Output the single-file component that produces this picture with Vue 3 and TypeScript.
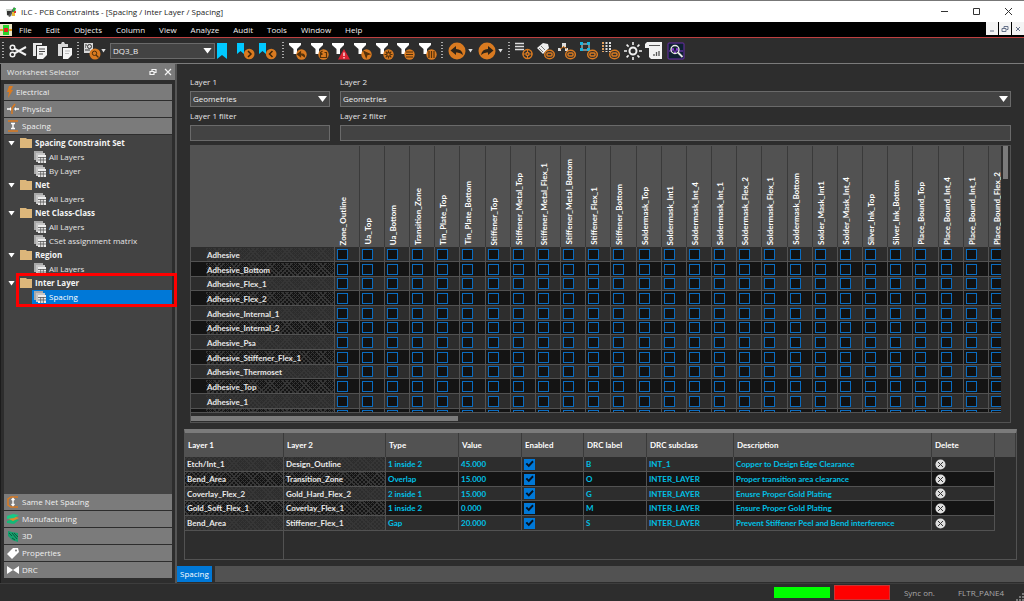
<script setup lang="ts">
import { ref } from 'vue'

interface Item { label: string; icon: string }
interface Group { label: string; sheets: string[] }
interface Rule {
  layer1: string; layer2: string; type: string; value: string
  enabled: boolean; drc: string; subclass: string; description: string
}

const menus = ['File', 'Edit', 'Objects', 'Column', 'View', 'Analyze', 'Audit', 'Tools', 'Window', 'Help']

const filters: Item[] = [
  { label: 'Restore filter', icon: 'back' },
  { label: 'Save filter', icon: 'box' },
  { label: 'Filter violations', icon: 'warn' },
  { label: 'Filter selection', icon: 'cursor' },
  { label: 'Filter settings', icon: 'gear' },
  { label: 'Filter rows', icon: 'rows' },
  { label: 'Filter columns', icon: 'cols' },
]
const tools: Item[] = [
  { label: 'Target list', icon: 'list' },
  { label: 'Show tags', icon: 'tags' },
  { label: 'Show hierarchy', icon: 'tree' },
  { label: 'Show nodes', icon: 'nodes' },
  { label: 'Show grid', icon: 'grid' },
  { label: 'Options', icon: 'sun' },
  { label: 'Report', icon: 'report' },
  { label: 'Analyze', icon: 'analyze' },
]

const topDomains: Item[] = [
  { label: 'Electrical', icon: 'bolt' },
  { label: 'Physical', icon: 'physical' },
  { label: 'Spacing', icon: 'spacing' },
]
const bottomDomains: Item[] = [
  { label: 'Same Net Spacing', icon: 'samenet' },
  { label: 'Manufacturing', icon: 'layers' },
  { label: '3D', icon: 'cube' },
  { label: 'Properties', icon: 'tag' },
  { label: 'DRC', icon: 'drc' },
]
const groups: Group[] = [
  { label: 'Spacing Constraint Set', sheets: ['All Layers', 'By Layer'] },
  { label: 'Net', sheets: ['All Layers'] },
  { label: 'Net Class-Class', sheets: ['All Layers', 'CSet assignment matrix'] },
  { label: 'Region', sheets: ['All Layers'] },
  { label: 'Inter Layer', sheets: ['Spacing'] },
]

const columns = [
  'Zone_Outline', 'Ua_Top', 'Ua_Bottom', 'Transition_Zone', 'Tin_Plate_Top', 'Tin_Plate_Bottom',
  'Stiffener_Top', 'Stiffener_Metal_Top', 'Stiffener_Metal_Flex_1', 'Stiffener_Metal_Bottom',
  'Stiffener_Flex_1', 'Stiffener_Bottom', 'Soldermask_Top', 'Soldermask_Int1', 'Soldermask_Int_4',
  'Soldermask_Int_1', 'Soldermask_Flex_2', 'Soldermask_Flex_1', 'Soldermask_Bottom',
  'Solder_Mask_Int1', 'Solder_Mask_Int_4', 'Silver_Ink_Top', 'Silver_Ink_Bottom', 'Place_Bound_Top',
  'Place_Bound_Int_4', 'Place_Bound_Int_1', 'Place_Bound_Flex_2',
]
const rows = [
  'Adhesive', 'Adhesive_Bottom', 'Adhesive_Flex_1', 'Adhesive_Flex_2', 'Adhesive_Internal_1',
  'Adhesive_Internal_2', 'Adhesive_Psa', 'Adhesive_Stiffener_Flex_1', 'Adhesive_Thermoset',
  'Adhesive_Top', 'Adhesive_1', 'Assembly_Flex_1',
]

const rules = ref<Rule[]>([
  { layer1: 'Etch/Int_1', layer2: 'Design_Outline', type: '1 inside 2', value: '45.000', enabled: true, drc: 'B', subclass: 'INT_1', description: 'Copper to Design Edge Clearance' },
  { layer1: 'Bend_Area', layer2: 'Transition_Zone', type: 'Overlap', value: '15.000', enabled: true, drc: 'O', subclass: 'INTER_LAYER', description: 'Proper transition area clearance' },
  { layer1: 'Coverlay_Flex_2', layer2: 'Gold_Hard_Flex_2', type: '2 inside 1', value: '15.000', enabled: true, drc: 'G', subclass: 'INTER_LAYER', description: 'Enusre Proper Gold Plating' },
  { layer1: 'Gold_Soft_Flex_1', layer2: 'Coverlay_Flex_1', type: '1 inside 2', value: '0.000', enabled: true, drc: 'M', subclass: 'INTER_LAYER', description: 'Ensure Proper Gold Plating' },
  { layer1: 'Bend_Area', layer2: 'Stiffener_Flex_1', type: 'Gap', value: '20.000', enabled: true, drc: 'S', subclass: 'INTER_LAYER', description: 'Prevent Stiffener Peel and Bend interference' },
])
const heads = ['Layer 1', 'Layer 2', 'Type', 'Value', 'Enabled', 'DRC label', 'DRC subclass', 'Description', 'Delete', '']
const filter1 = ref('')
const filter2 = ref('')
const removeRule = (i: number) => rules.value.splice(i, 1)
</script>

<template>
  <div class="window">
    <header class="titlebar">
      <svg class="app-icon" viewBox="0 0 12 12">
        <path d="M1 3h7v7H2z" fill="#c9cfc9" /><path d="M2 5h4v4H2z" fill="#333" />
        <path d="M3 10 9 1l1 1-5 9z" fill="#555" /><path d="M8 2h3l-1 4H8z" fill="#2fae3e" />
        <path d="M7 6h3v4H7z" fill="#e9b93a" /><path d="M9 5h2v2H9z" fill="#d33" />
      </svg>
      <h1>ILC - PCB Constraints - [Spacing / Inter Layer / Spacing]</h1>
      <div class="win-controls">
        <button aria-label="Minimize"><svg viewBox="0 0 9 9"><path d="M1 4.500h7" /></svg></button>
        <button aria-label="Maximize"><svg viewBox="0 0 9 9"><path d="M1.500 1.500h6v6h-6z" /></svg></button>
        <button aria-label="Close"><svg viewBox="0 0 9 9"><path d="M1 1l7 7M8 1 1 8" /></svg></button>
      </div>
    </header>

    <nav class="menubar">
      <svg class="doc-icon" viewBox="0 0 12 12">
        <path d="M0 0h12v12H0z" fill="#e9e4c4" /><path d="M3 1h6v10H3z" fill="#2bd52b" />
        <path d="M4 4h4v4H4z" fill="#e52222" /><path d="M0 5h3v2H0zM9 5h3v2H9z" fill="#e8a020" />
      </svg>
      <button v-for="m in menus" :key="m" class="menu">{{ m }}</button>
      <div class="mdi">
        <button aria-label="Minimize sheet"><svg viewBox="0 0 8 8"><path d="M2 6h4" /></svg></button>
        <button aria-label="Restore sheet"><svg viewBox="0 0 8 8"><path d="M3 3V1.500h4v3H5.500M1 3.500h4v3H1z" /></svg></button>
        <button aria-label="Close sheet"><svg viewBox="0 0 8 8"><path d="M2 2l4 4M6 2 2 6" /></svg></button>
      </div>
    </nav>

    <div class="toolbar">
      <span class="grip"></span>
      <div class="tools edit">
        <button aria-label="Cut"><svg viewBox="0 0 18 18" fill="none" stroke="#f2f2f2" stroke-width="1.500">
          <circle cx="3.500" cy="5.500" r="2.300" /><circle cx="3.500" cy="12.500" r="2.300" />
          <path d="M5.500 6.700 17 13M5.500 11.300 17 5" stroke-width="2" />
        </svg></button>
        <button aria-label="Copy"><svg viewBox="0 0 18 18">
          <path d="M0 1h9v2H3v11H0z" fill="#e6e6e6" /><path d="M4 4h10v9l-4 4H4z" fill="#f4f4f4" />
          <path d="M6 7h6M6 9.500h6M6 12h4" stroke="#444" />
        </svg></button>
        <button aria-label="Paste"><svg viewBox="0 0 18 18">
          <path d="M2 2h3l1-2h2l1 2h3v3H6v9H2z" fill="#d9d9d9" /><path d="M7 6h9v7l-4 4H7z" fill="#f4f4f4" />
          <path d="M9 9h5M9 11.500h4" stroke="#bbb" />
        </svg></button>
      </div>
      <span class="grip"></span>
      <button class="find" aria-label="Find"><svg viewBox="0 0 18 18">
        <path d="M1 1h9v10H1z" fill="#d8d8d8" /><circle cx="6.500" cy="4.500" r="2" fill="none" stroke="#333" />
        <path d="M2 8h5M2 3h2M2 5h1" stroke="#333" /><circle cx="12" cy="12" r="5.500" fill="#d97a20" />
        <circle cx="11.500" cy="11.300" r="2.200" fill="none" stroke="#50300c" /><path d="m13 13 2.500 2.500" stroke="#50300c" stroke-width="1.300" />
      </svg></button>
      <button class="drop" aria-label="Find options"></button>
      <div class="select finder">
        <select aria-label="Search text"><option>DQ3_B</option></select>
      </div>
      <button class="mark" aria-label="Bookmark"><svg viewBox="0 0 10 18"><path d="M0 1h10v16l-5-4-5 4z" fill="#00c8ff" /></svg></button>
      <div class="tools marks">
        <button v-for="d in ['Next', 'Previous']" :key="d" :aria-label="d + ' bookmark'"><svg viewBox="0 0 18 18">
          <path d="M0 1h7v11l-3.500-3L0 12z" fill="#00c8ff" /><circle cx="12.200" cy="12" r="5.300" fill="#d97a20" />
          <path :d="d === 'Next' ? 'm11 9 3 3-3 3' : 'm13.500 9-3 3 3 3'" fill="none" stroke="#3c2408" stroke-width="1.500" />
        </svg></button>
      </div>
      <span class="grip"></span>
      <div class="tools filters">
        <button v-for="f in filters" :key="f.icon" :aria-label="f.label"><svg viewBox="0 0 18 18">
          <path d="M0 1h12v2L8 7v5H4.500V7L0 3z" fill="#fff" />
          <path v-if="f.icon === 'warn'" d="m12 7 6 10.500H6z" fill="#d92231" />
          <circle v-else cx="12.500" cy="12.500" r="5.200" fill="#d97a20" />
          <path v-if="f.icon === 'warn'" d="M12 10.500V14M12 15v1.500" stroke="#fff" stroke-width="1.200" />
          <g v-else fill="none" stroke="#54310b" stroke-width="1.200">
            <path v-if="f.icon === 'back'" d="M11.500 10v4.500l-3-2.200zM10.500 12.200h3q2 0 2 3" fill="#54310b" />
            <path v-if="f.icon === 'box'" d="M9.500 11v4.500h6v-5h-2M11.500 9l-2 1.500 2 2" />
            <path v-if="f.icon === 'cursor'" d="m10 9.500 5.500 2.500-2.500.7-.8 2.500z" fill="#54310b" />
            <g v-if="f.icon === 'gear'"><circle cx="12.500" cy="12.500" r="1.800" /><path d="M12.500 8.500v2M12.500 14.500v2M8.500 12.500h2M14.500 12.500h2M9.700 9.700l1.300 1.300M14 14l1.300 1.300M15.300 9.700 14 11M9.700 15.300 11 14" /></g>
            <path v-if="f.icon === 'rows'" d="M9 10h7M9 12.500h7M9 15h7" />
            <path v-if="f.icon === 'cols'" d="M10 9v7M12.500 9v7M15 9v7" />
          </g>
        </svg></button>
      </div>
      <span class="grip"></span>
      <div class="history">
        <button aria-label="Undo"><svg viewBox="0 0 18 18"><circle cx="9" cy="9" r="8.500" fill="#d97a20" />
          <path d="M2.500 8.500 8 4v3q6 0 7 6-3-3-7-2.500V13z" fill="#2e2418" /></svg></button>
        <button class="drop" aria-label="Undo history"></button>
        <button aria-label="Redo"><svg viewBox="0 0 18 18"><circle cx="9" cy="9" r="8.500" fill="#d97a20" />
          <path d="M15.500 8.500 10 4v3q-6 0-7 6 3-3 7-2.500V13z" fill="#2e2418" /></svg></button>
        <button class="drop" aria-label="Redo history"></button>
      </div>
      <span class="grip"></span>
      <div class="tools views">
        <button v-for="t in tools" :key="t.icon" :aria-label="t.label"><svg viewBox="0 0 18 18">
          <path v-if="t.icon === 'list'" d="M0 1.500h9M0 4.500h9M0 7.500h9" stroke="#ddd" stroke-width="1.600" />
          <g v-if="t.icon === 'tags'"><path d="m0 6 6-5 5 1 1 4-6 6z" fill="#eee" /><path d="m2 6 4 4M4 4l4 4" stroke="#444" stroke-width=".7" /></g>
          <path v-if="t.icon === 'tree'" d="M4 1h4v4H4zM0 6h3v3H0zM7 6h3v3H7z" fill="#ddd" />
          <path v-if="t.icon === 'tree'" d="M5.500 4v1L2 7M6 5l3 2" stroke="#d97a20" fill="none" />
          <g v-if="t.icon === 'nodes'"><path d="M2 2h7v6H2z" fill="none" stroke="#ddd" /><path d="M0 0h3v3H0zM7 0h3v3H7zM0 6h3v3H0zM7 6h3v3H7z" fill="#19b5e0" /></g>
          <g v-if="t.icon === 'grid'"><path d="M1 0v10" stroke="#e0a060" stroke-width="2" stroke-dasharray="2 1" /><path d="M4.500 0v10M8 0v10" stroke="#ddd" stroke-width="2" stroke-dasharray="2 1" /></g>
          <g v-if="t.icon === 'list'" fill="none" stroke="#d97a20" stroke-width="1.500"><circle cx="12.500" cy="12" r="4.500" /><circle cx="12.500" cy="12" r="1.600" /><path d="M12.500 7v3M12.500 14v3M7.500 12h3M14.500 12h3" stroke-width="1" /></g>
          <g v-if="['tags', 'tree', 'nodes', 'grid'].includes(t.icon)" fill="none" stroke="#d97a20" stroke-width="1.500"><ellipse cx="12.500" cy="12.500" rx="4.800" ry="4.300" /><rect x="10" y="11" width="5" height="3" rx="1" /></g>
          <g v-if="t.icon === 'sun'" fill="none" stroke="#f2f2f2" stroke-width="2"><circle cx="9" cy="9" r="3.500" /><path d="M9 0v3M9 15v3M0 9h3M15 9h3M2.600 2.600l2 2M13.400 13.400l2 2M15.400 2.600l-2 2M2.600 15.400l2-2" stroke-width="1.600" /></g>
          <g v-if="t.icon === 'report'"><path d="M2 0h15v17H6l-2-2V6H0V2z" fill="#f2f2f2" /><path d="M4 3.500h11" stroke="#555" /><path d="M9 14v-2M11.500 14v-4M14 14V9" stroke="#555" stroke-width="1.300" /></g>
          <g v-if="t.icon === 'analyze'"><rect x="1" y="1" width="16" height="16" rx="1" fill="#0d2030" stroke="#6a2ca8" /><path d="M2 9h3l1-3 2 6 2-6 1 3h5" fill="none" stroke="#8a3ad0" /><circle cx="8" cy="7.500" r="4" fill="none" stroke="#e8e8e8" stroke-width="1.300" /><path d="m11 10.500 4.500 4.500" stroke="#e8e8e8" stroke-width="1.800" /></g>
        </svg></button>
      </div>
    </div>

    <div class="body">
      <aside class="sidebar">
        <div class="side-head">
          <h2>Worksheet Selector</h2>
          <button aria-label="Float panel"><svg viewBox="0 0 8 8"><path d="M3 3V1.500h4v3H5.500M1 3.500h4v3H1z" /></svg></button>
          <button aria-label="Close panel"><svg viewBox="0 0 8 8"><path d="m1 1 6 6M7 1 1 7" /></svg></button>
        </div>
        <div class="side-body">
          <button v-for="d in topDomains" :key="d.label" class="domain">
            <svg v-if="d.icon === 'bolt'" class="thin" viewBox="0 0 6 12"><path d="M2 0h4L4 4h2L1 12l1-6H0z" fill="#d97a20" /></svg>
            <svg v-else-if="d.icon === 'physical'" viewBox="0 0 12 12"><path d="M0 6h4M12 6H8" stroke="#fff" stroke-width="1.500" /><path d="m3 4 2 2-2 2zM9 4 7 6l2 2z" fill="#fff" /><path d="M5 11V5l3-4" fill="none" stroke="#d97a20" stroke-width="1.500" /></svg>
            <svg v-else viewBox="0 0 12 12"><path d="M1 1h10M1 11h10" stroke="#d97a20" stroke-width="1.500" /><path d="M6 3v6M4 3.500h4M4 8.500h4" stroke="#fff" stroke-width="1.500" /></svg>
            {{ d.label }}
          </button>
          <ul class="tree">
            <li v-for="g in groups" :key="g.label" :class="{ marked: g.label === 'Inter Layer' }">
              <button class="branch">
                <span class="caret"></span>
                <svg viewBox="0 0 12 12"><path d="M0 1h6l1 1h5v9H0z" fill="#dcb67a" /></svg>
                {{ g.label }}
              </button>
              <ul>
                <li v-for="s in g.sheets" :key="s">
                  <button class="leaf" :class="{ selected: s === 'Spacing' }">
                    <svg viewBox="0 0 12 12"><path d="M0 0h9v3H3v6H0z" fill="#a8a8a8" /><path d="M2 2h9v3H5v6H2z" fill="#c4c4c4" /><path d="M4 4h8v8H4z" fill="#ececec" /><path d="M4 6.500h8M4 9h8M6.700 6v6M9.300 6v6" stroke="#555" stroke-width=".8" /></svg>
                    {{ s }}
                  </button>
                </li>
              </ul>
            </li>
          </ul>
          <button v-for="d in bottomDomains" :key="d.label" class="domain">
            <svg v-if="d.icon === 'samenet'" viewBox="0 0 12 12"><path d="M11 1H4L1 3v6l3 2h7" fill="none" stroke="#d97a20" stroke-width="1.500" /><path d="M6 3v6M4.500 4 6 2.500 7.500 4M4.500 8 6 9.500 7.500 8" fill="none" stroke="#fff" stroke-width="1.300" /></svg>
            <svg v-else-if="d.icon === 'layers'" viewBox="0 0 12 12"><path d="m0 8 6-2 6 1-5 4-7-1z" fill="#14b877" /><path d="m0 5 6-2 6 2-6 3z" fill="#e08a28" /><path d="m0 3 6-2 6 1-5 3-7 1z" fill="#18c985" /></svg>
            <svg v-else-if="d.icon === 'cube'" viewBox="0 0 12 12"><path d="m1 1 4 1 6 1v9L5 10 1 6z" fill="#14a06c" /><path d="m2 3 3 3M5 3l5 6M7 3l4 4M5 8l3 2" stroke="#0b5a40" /></svg>
            <svg v-else-if="d.icon === 'tag'" viewBox="0 0 12 12"><path d="m0 7 6-6h5l1 4-7 7z" fill="#fff" /><circle cx="9" cy="3.500" r="1" fill="#777" /></svg>
            <svg v-else viewBox="0 0 12 12"><path d="m0 2 6 4 6-4v8L6 6l-6 4z" fill="#fff" /></svg>
            {{ d.label }}
          </button>
        </div>
      </aside>

      <main class="sheet">
        <div class="fields">
          <label for="l1">Layer 1</label>
          <label for="l2">Layer 2</label>
          <div class="select"><select id="l1"><option>Geometries</option></select></div>
          <div class="select"><select id="l2"><option>Geometries</option></select></div>
          <label for="f1">Layer 1 filter</label>
          <label for="f2">Layer 2 filter</label>
          <input id="f1" v-model="filter1" type="text">
          <input id="f2" v-model="filter2" type="text">
        </div>

        <div class="matrix">
          <div class="viewport">
            <table class="layers">
              <colgroup><col class="name"><col v-for="(c, i) in columns" :key="c" :class="i % 6 === 5 ? 'wide' : 'cell'"></colgroup>
              <thead>
                <tr><td></td><th v-for="c in columns" :key="c" scope="col"><span>{{ c }}</span></th></tr>
              </thead>
              <tbody>
                <tr v-for="r in rows" :key="r">
                  <th scope="row"><span>{{ r }}</span></th>
                  <td v-for="c in columns" :key="c"><input type="checkbox" :aria-label="r + ' / ' + c"></td>
                </tr>
              </tbody>
            </table>
          </div>
          <div class="vbar"><span></span></div>
          <div class="hbar"><span></span></div>
        </div>

        <div class="rules">
          <table>
            <colgroup><col v-for="(h, i) in heads" :key="h" :class="'c' + i"></colgroup>
            <thead><tr><th v-for="h in heads" :key="h" scope="col">{{ h }}</th></tr></thead>
            <tbody>
              <tr v-for="(r, i) in rules" :key="i">
                <td class="hatch">{{ r.layer1 }}</td>
                <td class="hatch">{{ r.layer2 }}</td>
                <td>{{ r.type }}</td>
                <td>{{ r.value }}</td>
                <td><input v-model="r.enabled" type="checkbox" :aria-label="'Enable rule ' + r.drc"></td>
                <td>{{ r.drc }}</td>
                <td>{{ r.subclass }}</td>
                <td>{{ r.description }}</td>
                <td><button class="delete" :aria-label="'Delete rule ' + r.drc" @click="removeRule(i)"><svg viewBox="0 0 11 11"><circle cx="5.500" cy="5.500" r="5" fill="#dedede" /><path d="m3 3 5 5M8 3 3 8" stroke="#333" /></svg></button></td>
                <td class="end"></td>
              </tr>
            </tbody>
            <tfoot><tr><td></td><td colspan="9"></td></tr></tfoot>
          </table>
        </div>

        <div class="tabs"><button class="tab">Spacing</button><span></span></div>
      </main>
    </div>

    <footer class="status">
      <span class="lamp ok"></span>
      <span class="lamp bad"></span>
      <span class="sync">Sync on.</span>
      <span>FLTR_PANE4</span>
      <svg viewBox="0 0 8 8"><path d="M6 0h2v2H6zM3 3h2v2H3zM6 3h2v2H6zM0 6h2v2H0zM3 6h2v2H3zM6 6h2v2H6z" fill="#777" /></svg>
    </footer>
  </div>
</template>

<style>
html, body { margin: 0; background: #2d2d2d; }
</style>

<style scoped>
.window {
  display: flex; flex-direction: column; height: 100vh; overflow: hidden;
  background: #2d2d2d; color: #e6e6e6;
  font: 8px/12px "Open Sans", "Noto Sans", sans-serif;
}
.window *, .window *::after, .window *::before { box-sizing: border-box; }
button, select, input { font: inherit; color: inherit; margin: 0; padding: 0; border: 0; background: none; border-radius: 0; }
button { display: flex; align-items: center; justify-content: center; }
svg { display: block; flex: none; }
h1, h2 { margin: 0; font-size: inherit; font-weight: 400; }
ul { list-style: none; margin: 0; padding: 0; }

.titlebar { flex: none; display: flex; align-items: center; height: 22px; background: #fff; border-top: 1px solid #777; padding-left: 5px; color: #222; }
.app-icon { width: 12px; height: 12px; margin-right: 4px; }
.titlebar h1 { flex: 1; }
.win-controls { display: flex; }
.win-controls button { width: 32px; height: 20px; }
.win-controls svg { width: 9px; height: 9px; fill: none; stroke: #333; }

.menubar { flex: none; display: flex; align-items: center; height: 16px; background: #000; border-bottom: 1px solid #c04040; }
.doc-icon { width: 12px; height: 12px; margin-right: 7px; }
.menu { margin-right: 14px; color: #f0f0f0; white-space: nowrap; }
.mdi { display: flex; margin-left: auto; gap: 1px; align-self: flex-start; }
.mdi button { width: 12px; height: 13px; background: #f4f4f4; }
.mdi svg { width: 8px; height: 8px; fill: none; stroke: #66728a; }

.toolbar { flex: none; display: flex; align-items: center; height: 26px; border-bottom: 1px solid #7b7b7b; padding-left: 2px; }
.grip { flex: none; width: 2px; height: 18px; background: repeating-linear-gradient(#aaa 0 1px, transparent 1px 3px); }
.tools { flex: none; display: flex; justify-content: space-between; }
.tools svg, .find svg, .history svg { width: 18px; height: 18px; }
.edit { width: 65px; margin: 0 3px 0 5px; }
.find { margin-left: 4px; }
.drop { width: 5px; height: 4px; background: #ddd; clip-path: polygon(0 0, 100% 0, 50% 100%); }
.find + .drop { margin-right: 4px; }
.mark { margin: 0 10px 0 2px; }
.mark svg { width: 10px; height: 18px; }
.marks { width: 40px; margin-right: 5px; }
.filters { width: 148px; margin: 0 4px 0 5px; }
.history { display: flex; align-items: center; gap: 2px; margin: 0 5px 0 5px; }
.history .drop { margin-right: 3px; }
.history .drop:last-child { margin-right: 0; }
.views { width: 170px; margin-left: 5px; }

.select { position: relative; min-width: 0; }
.select select { appearance: none; display: block; width: 100%; height: 16px; padding: 0 14px 0 2px; background: #434343; border: 1px solid #6a6a6a; color: #f0f0f0; }
.select::after { content: ""; position: absolute; right: 3px; top: 5px; width: 9px; height: 6px; background: #fff; clip-path: polygon(0 0, 100% 0, 50% 100%); pointer-events: none; }
.finder { width: 105px; }

.body { flex: 1; min-height: 0; display: flex; }
.sidebar { flex: none; display: flex; flex-direction: column; width: 177px; border-left: 1px solid #1c1c1c; border-right: 2px solid #555; }
.side-head { flex: none; display: flex; align-items: center; height: 16px; background: #7b7b7b; padding: 0 0 0 6px; }
.side-head h2 { flex: 1; }
.side-head button { width: 15px; height: 14px; }
.side-head svg { width: 8px; height: 8px; fill: none; stroke: #f4f4f4; stroke-width: 1.2; }
.side-body { flex: 1; min-height: 0; display: flex; flex-direction: column; margin: 4px 3px 4px; }
.domain { flex: none; justify-content: flex-start; gap: 3px; height: 17px; padding: 0 3px; background: #7b7b7b; color: #f0f0f0; border-bottom: 1px solid #2d2d2d; }
.domain svg { width: 12px; height: 12px; }
.domain svg.thin { width: 6px; }
.tree { flex: 1; padding-top: 1px; background: #434343; }
.tree button { height: 14px; width: 100%; justify-content: flex-start; }
.tree svg { width: 12px; height: 12px; }
.branch { padding-left: 4px; font-weight: 700; color: #f4f4f4; }
.caret { width: 7px; height: 5px; margin-right: 5px; background: #fff; clip-path: polygon(0 0, 100% 0, 50% 100%); }
.branch svg { margin-right: 3px; }
.tree li li { padding-left: 28px; }
.tree .leaf { padding-left: 2px; gap: 3px; }
.leaf.selected { background: #0078d7; color: #fff; }
.marked { position: relative; }
.marked::after { content: ""; position: absolute; left: 12px; right: -5px; top: -3px; bottom: -3px; border: 3px solid #f00; pointer-events: none; }

.sheet { flex: 1; min-width: 0; display: flex; flex-direction: column; }
.fields { display: grid; grid-template-columns: 140px 1fr; gap: 3px 10px; padding: 12px 13px 4px; }
.fields input { width: 100%; height: 16px; padding: 0 3px; background: #434343; border: 1px solid #6a6a6a; outline: 0; }

.matrix { flex: 1; min-height: 0; display: grid; grid-template-columns: 1fr 9px; grid-template-rows: 1fr 9px; margin: 0 13px 6px; border: 1px solid #525252; }
.viewport { overflow: hidden; min-width: 0; min-height: 0; border-bottom: 1px solid #525252; }
.layers, .rules table { border-collapse: separate; border-spacing: 0; table-layout: fixed; font-family: Lato, "Open Sans", sans-serif; font-size: 8px; }
.layers { width: 0; }
.name { width: 144px; }
.cell { width: 25px; }
.wide { width: 26px; }
.layers td, .layers th { padding: 0; border-right: 1px solid #525252; border-bottom: 1px solid #525252; text-align: left; overflow: hidden; }
.layers thead td, .layers thead th { height: 101px; background: #525252; border-bottom: 0; }
.layers thead th { border-right-color: #3a3a3a; vertical-align: bottom; font-weight: 700; color: #fff; }
.layers thead span { display: block; width: 9px; margin-left: 4px; writing-mode: vertical-rl; transform: rotate(180deg); line-height: 9px; white-space: nowrap; padding-top: 2px; }
.layers tbody tr { height: 15px; }
.layers tbody tr:nth-child(3n) { height: 14px; }
tbody tr:nth-child(even) { background: #141414; }
.layers tbody th { padding-left: 15px; font-weight: 700; }
.layers tbody th span { display: block; padding-left: 1px; height: 13px; line-height: 14px; }
.hatch, .layers tbody th span {
  background-image:
    repeating-linear-gradient(45deg, #0000 0 2px, #363636 2px 3px),
    repeating-linear-gradient(-45deg, #0000 0 2px, #363636 2px 3px);
}
input[type="checkbox"] { appearance: none; display: block; width: 11px; height: 11px; margin-left: 2px; border: 1px solid #0a6cc0; background: #111; }
input[type="checkbox"]:checked { border: 0; background: #0078d7; }
input[type="checkbox"]:checked::after { content: ""; display: block; width: 11px; height: 11px; background: #06121e; clip-path: polygon(14% 50%, 28% 38%, 42% 54%, 76% 18%, 88% 32%, 44% 80%); }
.vbar span { display: block; width: 5px; height: 33px; margin-left: 2px; background: #7b7b7b; }
.hbar { padding-top: 3px; }
.hbar span { display: block; width: 33%; height: 5px; background: #7b7b7b; }

.rules { flex: none; margin: 0 7px; border: 1px solid #525252; border-top: 4px solid #7b7b7b; }
.rules table { width: 100%; }
.c0 { width: 99px; } .c1 { width: 102px; } .c2 { width: 73px; } .c3 { width: 63px; } .c4 { width: 62px; }
.c5 { width: 63px; } .c6 { width: 87px; } .c8 { width: 63px; } .c9 { width: 21px; }
.rules th { height: 24px; padding: 0 3px; text-align: left; font-weight: 700; background: #525252; border-right: 1px solid #3a3a3a; color: #fff; }
.rules td { padding: 0 2px; border-right: 1px solid #525252; border-bottom: 1px solid #525252; font-weight: 700; color: #00c0e6; white-space: nowrap; }
.rules tbody tr { height: 15px; }
.rules tbody tr:nth-child(3n) { height: 14px; }
.rules .hatch { color: #eaeaea; }
.rules .end { background: #2d2d2d; border: 0; }
.rules tfoot td { height: 28px; border-bottom: 0; }
.rules tfoot td:last-child { border-right: 0; }
.rules input { margin-left: 0; }
.delete { margin-left: 1px; }
.delete svg { width: 11px; height: 11px; }

.tabs { flex: none; display: flex; gap: 3px; height: 16px; margin-top: 6px; margin-bottom: 1px; }
.tab { padding: 0 3px; background: #0078d7; color: #fff; }
.tabs span { flex: 1; background: #525252; }

.status { flex: none; display: flex; align-items: center; height: 18px; border-top: 1px solid #3d3d3d; color: #a8a8a8; }
.lamp { width: 56px; margin-right: 4px; }
.ok { height: 11px; background: #0f0; margin-left: auto; }
.bad { height: 15px; background: #f00; border: 1px solid #c33; margin-right: 14px; }
.sync { width: 54px; }
.status svg { width: 8px; height: 8px; margin-left: 12px; align-self: flex-end; }
</style>
